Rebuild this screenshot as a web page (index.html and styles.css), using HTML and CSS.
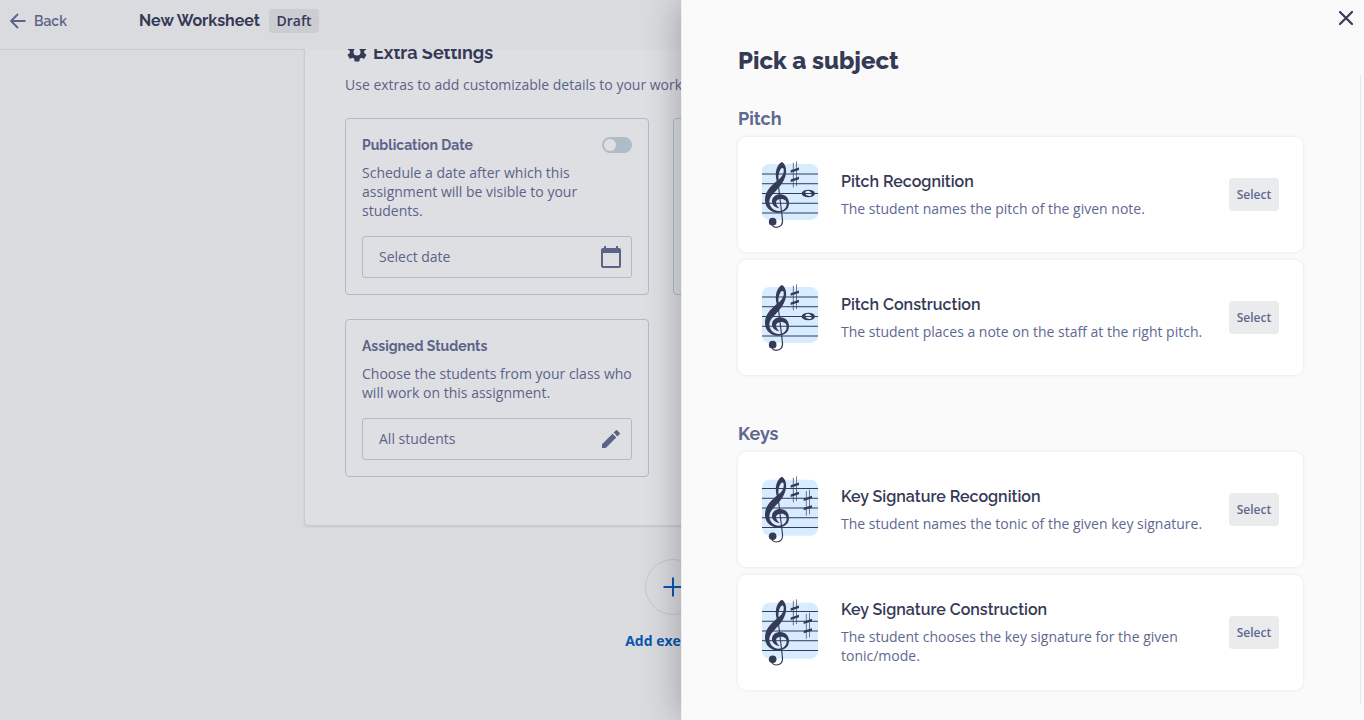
FILE: index.html
```html
<!DOCTYPE html>
<html lang="en">
<head>
<meta charset="utf-8">
<title>New Worksheet</title>
<link rel="stylesheet" href="styles.css">
</head>
<body>
<svg class="defs" aria-hidden="true">
  <defs>
    <g id="clef">
      <path fill-rule="evenodd" d="M80 93C73 66 81 43 96 36C105 41 110 54 108 69C105 93 90 109 78 122C65 136 58 143 58 157C60 173 71 183 86 183C100 183 110 174 110 161C110 152 103 147 93 147C84 147 78 151 78 158C79 165 83 170 89 175C75 173 66 165 66 154C66 141 78 133 91 133C106 133 117 144 117 160C117 179 102 188 84 188C61 188 45 172 45 150C45 124 62 109 80 93ZM86 89C98 79 103 68 101 57C99 52 94 53 91 59C86 68 84 77 86 89Z"/>
      <path d="M83 88L97 205C100 224 92 232 78 232Q70 231 66 226" fill="none" stroke="#353a56" stroke-width="3.400"/>
      <circle cx="68" cy="215" r="11.500"/>
    </g>
    <g id="sharp">
      <path d="M130 38V112M139.500 34V108" fill="none" stroke="#353a56" stroke-width="2"/>
      <path d="M122 60.500L147 52.500V60L122 68ZM122 88.500L147 80.500V88L122 96Z"/>
    </g>
    <symbol id="pitch" viewBox="36 24 168 216">
      <rect x="36" y="42" width="168" height="168" rx="22" fill="#d7ecff"/>
      <path d="M36 72H204M36 101.200H204M36 130.500H204M36 159.800H204M36 189H204" stroke="#353a56" stroke-width="3"/>
      <use href="#clef"/><use href="#sharp"/>
      <path fill-rule="evenodd" d="M155 130.500A20 11.500 0 0 1 195 130.500A20 11.500 0 0 1 155 130.500ZM168 124C162 131 170 139 180 138C189 136 185 123 174 122Q170 122 168 124Z"/>
    </symbol>
    <symbol id="keysig" viewBox="36 24 168 216">
      <rect x="36" y="44" width="168" height="168" rx="22" fill="#d7ecff"/>
      <path d="M36 70.500H204M36 99.800H204M36 129H204M36 158.200H204M36 187.500H204" stroke="#353a56" stroke-width="3"/>
      <use href="#clef" y="-1"/><use href="#sharp"/><use href="#sharp" x="39" y="40"/>
    </symbol>
  </defs>
</svg>
<div class="app">
  <header class="topbar">
    <a class="back">
      <svg width="16" height="16" viewBox="0 0 16 16"><path d="M15.500 8H1M8 1L1 8L8 15" fill="none" stroke="currentColor" stroke-width="1.900"/></svg>
      <span>Back</span>
    </a>
    <h1 class="doc-title">New Worksheet</h1>
    <span class="badge">Draft</span>
  </header>
  <main class="workspace">
    <section class="sheet">
      <h2 class="sheet-title">
        <svg width="24" height="24" viewBox="0 0 24 24" fill="currentColor"><path fill-rule="evenodd" d="M19.140 12.940c.04-.3.060-.61.060-.94s-.02-.64-.07-.94l2.030-1.580c.18-.14.230-.41.120-.61l-1.920-3.320c-.12-.22-.37-.29-.59-.22l-2.390.96c-.5-.38-1.030-.7-1.620-.94L14.400 2.810c-.04-.24-.24-.41-.48-.41h-3.840c-.24 0-.43.170-.47.410L9.250 5.350C8.660 5.590 8.120 5.920 7.630 6.290L5.240 5.330c-.22-.08-.47 0-.59.220L2.740 8.870c-.12.210-.08.470.120.610l2.030 1.580C4.840 11.360 4.800 11.690 4.800 12s.02.640.070.940l-2.030 1.580c-.18.140-.23.410-.12.610l1.920 3.320c.12.220.370.290.590.220l2.390-.96c.5.380 1.030.7 1.620.94l.36 2.540c.05.240.240.410.480.410h3.840c.24 0 .44-.17.470-.41l.36-2.540c.59-.24 1.130-.56 1.620-.94l2.390.96c.22.080.470 0 .59-.22l1.920-3.320c.12-.22.070-.47-.12-.61zM12 15.500a3.500 3.500 0 1 1 0-7 3.500 3.500 0 0 1 0 7z"/></svg>
        <span>Extra Settings</span>
      </h2>
      <p class="sheet-intro">Use extras to add customizable details to your worksheet.</p>
      <div class="settings">
        <article class="setting">
          <div class="setting-head"><h3>Publication Date</h3><span class="toggle"></span></div>
          <p class="narrow">Schedule a date after which this assignment will be visible to your students.</p>
          <div class="field"><span>Select date</span>
            <svg width="22" height="22" viewBox="0 0 22 22"><path d="M4 0h2v2h10V0h2v2h1q2 0 2 2v16q0 2-2 2H3q-2 0-2-2V4q0-2 2-2h1zM3 7v13h16V7z" fill="currentColor" fill-rule="evenodd"/></svg>
          </div>
        </article>
        <article class="setting"></article>
        <article class="setting">
          <div class="setting-head"><h3>Assigned Students</h3></div>
          <p>Choose the students from your class who will work on this assignment.</p>
          <div class="field"><span>All students</span>
            <svg width="22" height="22" viewBox="0 0 22 22"><path d="M2 16.200V20h3.800L16.300 9.500l-3.800-3.800zM19.600 6.200c.5-.5.500-1 0-1.400l-2.400-2.400c-.5-.5-1-.5-1.400 0l-2.200 2.200 3.800 3.800z" fill="currentColor"/></svg>
          </div>
        </article>
      </div>
    </section>
    <div class="add">
      <span class="add-circle"><svg width="20" height="20" viewBox="0 0 20 20"><path d="M10 .5V19.500M.5 10H19.500" stroke="currentColor" stroke-width="2"/></svg></span>
      <span>Add exercises</span>
    </div>
  </main>
  <aside class="drawer">
    <svg class="close" width="16" height="16" viewBox="0 0 16 16"><path d="M2 2L14 14M14 2L2 14" stroke="currentColor" stroke-width="2.200" stroke-linecap="round"/></svg>
    <h2 class="drawer-title">Pick a subject</h2>
    <div class="drawer-body">
      <section class="group">
        <h3 class="group-title">Pitch</h3>
        <article class="subject"><svg class="staff"><use href="#pitch"/></svg><div class="info"><h4>Pitch Recognition</h4><p>The student names the pitch of the given note.</p></div><button>Select</button></article>
        <article class="subject"><svg class="staff"><use href="#pitch"/></svg><div class="info"><h4>Pitch Construction</h4><p>The student places a note on the staff at the right pitch.</p></div><button>Select</button></article>
      </section>
      <section class="group">
        <h3 class="group-title">Keys</h3>
        <article class="subject"><svg class="staff"><use href="#keysig"/></svg><div class="info"><h4>Key Signature Recognition</h4><p>The student names the tonic of the given key signature.</p></div><button>Select</button></article>
        <article class="subject"><svg class="staff"><use href="#keysig"/></svg><div class="info tall"><h4>Key Signature Construction</h4><p>The student chooses the key signature for the given tonic/mode.</p></div><button>Select</button></article>
      </section>
    </div>
  </aside>
</div>
</body>
</html>
```
FILE: styles.css
```css
* { box-sizing: border-box; margin: 0; }
body { font: 14px/19px "Open Sans", sans-serif; color: #5b6389; }
h1, h2, h3, h4 { font-family: Raleway, Lato, sans-serif; }
.defs { display: block; width: 0; height: 0; }
.app { position: relative; width: 1364px; height: 720px; overflow: hidden; background: #dadbdf; display: flex; flex-direction: column; }

.topbar { height: 50px; flex: none; display: flex; align-items: flex-start; border-bottom: 1px solid #caccd2; padding: 9px 10px 0; }
.back { display: flex; align-items: center; gap: 8px; height: 24px; width: 129px; font: 600 14px/24px Raleway, Lato, sans-serif; }
.doc-title { font-size: 16px; line-height: 23px; font-weight: 700; color: #353a56; width: 130px; white-space: nowrap; }
.badge { height: 24px; padding: 0 7.500px; background: #cccdd2; border-radius: 4px; color: #353a56; font-weight: 600; line-height: 24px; }

/* The scrolled sheet slides under the top bar and covers its bottom border. */
.workspace { flex: 1; min-height: 0; margin-top: -1px; overflow: hidden; padding-left: 304px; }
.sheet { width: 738px; height: 486px; margin-top: -9px; padding: 0 40px; background: #dedfe3; border: 1px solid #cacbd1; border-radius: 4px; box-shadow: 0 1px 2px rgba(53,58,86,.12); }
.sheet-title { display: flex; align-items: center; gap: 4px; height: 22px; font-size: 18px; font-weight: 700; color: #353a56; }
.sheet-intro { margin-top: 12px; white-space: nowrap; }
.settings { margin-top: 24px; display: grid; grid-template-columns: 304px 304px; gap: 24px; }
.setting { border: 1px solid #b0bbc4; border-radius: 4px; padding: 16px; }
.setting-head { display: flex; justify-content: space-between; align-items: center; height: 20px; }
.setting h3 { font-size: 14px; font-weight: 700; }
.setting p { margin: 8px 0 16px; }
.setting .narrow { width: 240px; }
.toggle { width: 30px; height: 16px; border-radius: 8px; background: #b0bcc5; padding: 2px; }
.toggle::before { content: ""; display: block; width: 12px; height: 12px; border-radius: 50%; background: #dedfe3; }
.field { height: 42px; border: 1px solid #b0bbc4; border-radius: 3px; padding: 0 9px 0 16px; display: flex; align-items: center; justify-content: space-between; }
.field span { padding-bottom: 1px; }
.field svg { margin-bottom: 1px; }
.add { width: 738px; margin-top: 33px; display: flex; flex-direction: column; align-items: center; font-weight: 700; color: #0a55b0; }
.add-circle { width: 56px; height: 56px; border: 1px solid #c6c7cb; border-radius: 50%; display: grid; place-items: center; margin-bottom: 16px; }

.drawer { position: absolute; left: 681px; top: 0; width: 683px; height: 720px; background: #fafafa; box-shadow: -4px 0 32px rgba(0,0,0,.24); color: #5f6891; padding: 46px 3px 0 56px; border-left: 1px solid #eeeeef; }
.close { position: absolute; right: 10px; top: 10px; color: #353a56; }
.drawer-title { height: 29px; font-size: 24px; line-height: 29px; font-weight: 800; color: #353a56; }
.drawer-body { height: 629px; border-right: 1px solid #e6e6e8; padding: 32px 57px 0 0; }
.group { display: flex; flex-direction: column; gap: 8px; margin-bottom: 47px; }
.group-title { font-size: 18px; font-weight: 700; line-height: 24px; height: 22px; }
.subject { height: 115px; background: #fff; border-radius: 8px; box-shadow: 0 0 3px rgba(53,58,86,.12); display: flex; align-items: center; padding: 0 24px; }
.staff { width: 56px; height: 72px; flex: none; fill: #353a56; margin-bottom: 1px; }
.info { flex: 1; margin-left: 23px; margin-right: 24px; }
.subject h4 { font-size: 16px; line-height: 20px; font-weight: 600; color: #353a56; padding-top: 1px; margin-bottom: 7px; }
.info.tall { padding-bottom: 1px; }
.subject button { width: 50px; height: 33px; border: 0; padding: 0; border-radius: 4px; background: #e9ebed; color: #5f6891; font: 600 12px "Open Sans", sans-serif; }
```
